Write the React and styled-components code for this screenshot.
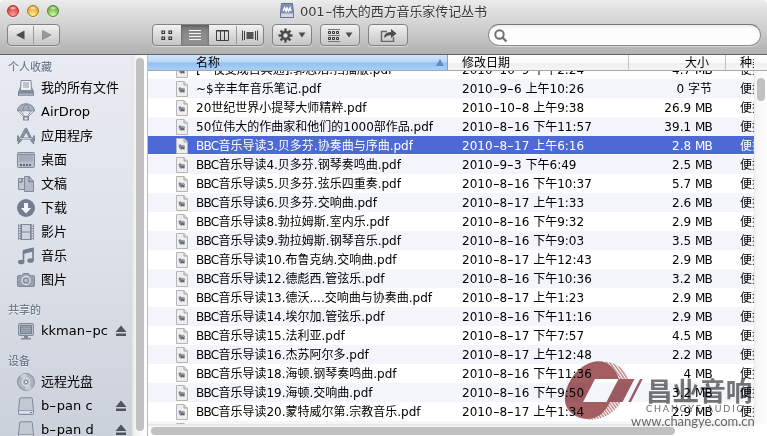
import React from "react";
import styled, { createGlobalStyle, css } from "styled-components";

const Global = createGlobalStyle`
  * { box-sizing: border-box; }
  body { margin: 0; background: #fff; overflow: hidden; }
`;

const Window = styled.div`
  position: relative;
  width: 767px;
  height: 436px;
  display: flex;
  flex-direction: column;
  overflow: hidden;
  font-family: "DejaVu Sans", "Noto Sans CJK SC", sans-serif;
  font-size: 12px;
  color: #000;
  svg { display: block; flex: none; }
`;

/* ---- title and toolbar ---- */
const Chrome = styled.header`
  height: 55px;
  flex: none;
  background: linear-gradient(#ececec, #e2e2e2 8px, #cdcdcd 30px, #b1b1b1);
  border-bottom: 1px solid #626262;
  border-radius: 4px 4px 0 0;
`;
const TitleBar = styled.div`
  height: 24px;
  display: flex;
  align-items: flex-start;
`;
const Lights = styled.div`
  display: flex;
  gap: 8px;
  padding: 5px 0 0 7px;
  width: 280px;
`;
const Light = styled.i`
  width: 12px;
  height: 12px;
  border-radius: 50%;
  border: 1px solid ${(p) => p.$edge};
  background: radial-gradient(ellipse 4px 2px at 5px 2px, #fffc, #fff0), radial-gradient(circle at 50% 90%, ${(p) => p.$glow}, ${(p) => p.$tone} 75%);
  box-shadow: 0 1px 0 #fff8;
`;
const TitleText = styled.div`
  display: flex;
  gap: 6px;
  padding-top: 3px;
  font-size: 13px;
  line-height: 17px;
  letter-spacing: -0.1px;
  color: #383838;
  white-space: nowrap;
  text-shadow: 0 1px 0 #fff8;
`;
const Tools = styled.div`
  display: flex;
  padding-left: 7px;
`;
const Group = styled.div`
  display: flex;
  width: ${(p) => p.$w}px;
  height: 22px;
  margin-right: ${(p) => p.$after || 0}px;
  border: 1px solid #828282;
  border-radius: 4px;
  background: linear-gradient(#f2f2f2, #dadada 50%, #c5c5c5);
  box-shadow: 0 1px 0 #ffffff70;
  overflow: hidden;
`;
const Segment = styled.div`
  flex: ${(p) => (p.$w ? `0 0 ${p.$w}px` : "1")};
  display: flex;
  align-items: center;
  justify-content: center;
  gap: 5px;
  ${(p) => p.$divided && css`
    border-left: 1px solid;
    border-image: linear-gradient(#0000 2px, #999 2px, #999 18px, #0000 18px) 1;
  `}
  ${(p) => p.$on && css`
    background: linear-gradient(#747474, #8a8a8a 40%, #929292);
    box-shadow: inset 0 1px 3px #555;
  `}
`;
const Search = styled.div`
  width: 273px;
  height: 22px;
  padding: 4px 0 0 5px;
  border: 1px solid #8d8d8d;
  border-top-color: #777;
  border-radius: 11px;
  background: linear-gradient(#ededed, #fcfcfc 4px, #fff);
  box-shadow: 0 1px 0 #fff7;
`;

/* ---- body ---- */
const Body = styled.div`
  display: flex;
  flex: 1;
  min-height: 0;
`;
const Sidebar = styled.aside`
  width: 132px;
  background: linear-gradient(#e8ebf1, #dee2ea 45%, #cbd1db);
  overflow: hidden;
`;
const Heading = styled.h2`
  margin: 0;
  padding: ${(p) => p.$top}px 0 0 8px;
  height: ${(p) => p.$h}px;
  font-size: 11px;
  line-height: 14px;
  font-weight: 500;
  color: #707d90;
  text-shadow: 0 1px 0 #fff9;
`;
const Place = styled.div`
  display: flex;
  align-items: center;
  height: 24px;
  padding-left: 17px;
  font-size: 13px;
  white-space: nowrap;
`;
const PlaceIcon = styled.span`
  width: 24px;
`;
const PlaceName = styled.span`
  width: 74px;
  line-height: 22px;
`;
const SideTrack = styled.div`
  width: 16px;
  padding: 3px 4px 0;
  background: linear-gradient(90deg, #dedede, #f0f0f0 2px, #fdfdfd 12px);
  border-right: 1px solid #bcbcbc;
`;
const Thumb = styled.div`
  width: ${(p) => p.$w}px;
  height: ${(p) => p.$h}px;
  border-radius: 4px;
  background: #c1c1c1;
`;
const Files = styled.main`
  flex: 1;
  min-width: 0;
  display: flex;
  flex-direction: column;
`;
const HeadRow = styled.div`
  display: flex;
  height: 16px;
  line-height: 17px;
  flex: none;
  border-bottom: 1px solid #a8a8a8;
  background: linear-gradient(#fff, #f9f9f9 50%, #eee 51%, #f5f5f5);
`;
const HeadCell = styled.div`
  width: ${(p) => p.$w}px;
  display: flex;
  justify-content: ${(p) => (p.$right ? "flex-end" : "space-between")};
  align-items: flex-start;
  padding: 0 ${(p) => p.$pr || 0}px 0 ${(p) => p.$pl || 0}px;
  border-right: ${(p) => (p.$last ? "0" : "1px solid #c4c4c4")};
  white-space: nowrap;
  overflow: hidden;
  svg { margin-top: 4px; }
  ${(p) => p.$sorted && css`
    background: linear-gradient(#d3e6fb, #b8d6f7 48%, #93c0f1 52%, #a9d0f7);
    border-right-color: #7ba0d6;
  `}
`;
const ListArea = styled.div`
  display: flex;
  height: 353px;
  flex: none;
`;
const Rows = styled.div`
  width: 606px;
  overflow: hidden;
  padding-top: 8px;
`;
const Row = styled.div`
  display: flex;
  align-items: center;
  height: 19px;
  line-height: 19px;
  padding: 2px 0 0 28px;
  white-space: nowrap;
  background: ${(p) => (p.$tint ? "#f3f5fa" : "#fff")};
  svg { margin-top: -1px; }
  &:first-child { margin-top: -19px; }
  ${(p) => p.$picked && css`
    background: linear-gradient(#4d69d6 18px, #fff 18px);
    color: #fff;
  `}
`;
const NameCell = styled.div` width: 274px; padding-left: 8px; flex: none; `;
const DateCell = styled.div` width: 154px; flex: none; `;
const SizeCell = styled.div` width: 96px; text-align: right; flex: none; `;
const KindCell = styled.div` padding-left: 28px; flex: none; `;
const ListTrack = styled.div`
  width: 13px;
  padding: 7px 0 0 3px;
  background: linear-gradient(90deg, #e8e8e8, #f6f6f6 2px, #fdfdfd);
`;
const BottomTrack = styled.div`
  flex: 1;
  width: 606px;
  padding: 3px 0 0 3px;
  background: linear-gradient(#dedede, #f5f5f5 2px, #fff 10px);
`;
const Dash = styled.span`
  display: inline-block;
  width: 0.58em;
  text-align: center;
  transform: scaleX(1.55);
`;
const Caps = styled.span` letter-spacing: -0.75px; `;

/* ---- watermark over the list ---- */
const Mark = styled.div`
  position: absolute;
  left: 560px;
  top: 356px;
  width: 194px;
  height: 80px;
  overflow: hidden;
  mix-blend-mode: multiply;
`;
const MarkLine = styled.div`
  position: absolute;
  left: ${(p) => p.$x}px;
  top: ${(p) => p.$y}px;
  white-space: nowrap;
  color: ${(p) => p.$tone || "#6c6c6c"};
  font-family: ${(p) => p.$font}, "Noto Sans CJK SC", sans-serif;
  font-size: ${(p) => p.$size}px;
  line-height: ${(p) => p.$size}px;
  font-weight: ${(p) => p.$weight || 400};
  letter-spacing: ${(p) => p.$gap || 0}px;
`;

const spaced = (text) =>
  text.split(/(-|BBC|MB)/).map((t, i) =>
    t === "-" ? <Dash key={i}>-</Dash> : t === "BBC" || t === "MB" ? <Caps key={i}>{t}</Caps> : t
  );

const G = "#7f899b";
const L = "#e3e7ee";
const Svg = ({ w = 18, h = 18, vb, children }) => (
  <svg width={w} height={h} viewBox={vb || `0 0 ${w} ${h}`} fill="none">{children}</svg>
);

const icons = {
  all: <Svg><path d="M4 1.500h10l.5 10h-11z" fill="#edf0f4" stroke={G} /><path d="M6 4h6M6 6h6M6 8h6" stroke="#8e97a7" /><path d="M3 8l-2 5v4h16v-4l-2-5v4H3z" fill={G} /><path d="M2 14.500h14v2H2z" fill="#a9b1bd" /></Svg>,
  airdrop: <Svg><path d="M.5 8C.5 3.500 4.500.8 9 .8S17.500 3.500 17.500 8q-1.500-1-3 0-1.500-1-3 0-2.500-1.300-5 0-1.500-1-3 0-1.500-1-3 0z" fill="#a6aebb" stroke={G} /><path d="M1 8l6 6M4 8l4 6M17 8l-6 6M14 8l-4 6M6 8Q6 3 9 1q3 2 3 7" stroke={G} strokeWidth=".8" /><path d="M6 13h6v4.500H6z" fill={G} /><path d="M7.500 14.500h3v2h-3z" fill={L} /></Svg>,
  apps: <Svg><path d="M1 17l1-4 5.500-10.500 1.500-1 1 2L4 14zM17 17l-2-1.500L7.500 2l2-1 6 12z" fill="#8b94a4" stroke={G} /><path d="M0 8.500h2v2h14v-2h2v6h-2v-2H2v2H0z" fill={G} /><path d="M3 11.500h12" stroke="#c4cad3" /></Svg>,
  desktop: <Svg><rect x=".5" y="1.500" width="17" height="15" rx="1" fill="#b9c0cb" stroke={G} /><path d="M2 3.500h14v7H2z" fill="#a4acb9" /><path d="M1 3.500h16" stroke="#8790a1" /><path d="M3 14h12" stroke="#5f6a7e" strokeWidth="2" strokeDasharray="2 1" /></Svg>,
  docs: <Svg><path d="M1.500 3.500v11h8v-8l-3-3z" fill="#c2c8d2" stroke={G} /><path d="M7.500 1.500v15h9v-10l-4-5z" fill="#b3bac6" stroke={G} /><path d="M12 1.500v5h5M5 4v3H2" stroke={G} strokeWidth="1.500" /></Svg>,
  down: <Svg><circle cx="9" cy="9" r="9" fill="#737d91" /><path d="M7 4h4v5h3.200L9 14.500 3.800 9H7z" fill="#f4f6f9" /></Svg>,
  movie: <Svg><path d="M1 1h16v16H1z" fill={G} /><path d="M5 2h8v6.500H5zM5 9.500h8V16H5z" fill="#ced3dc" /><path d="M2.500 1v16M15.500 1v16" stroke={L} strokeWidth="1.500" strokeDasharray="1.500 1" /></Svg>,
  music: <Svg><path d="M6.500 15V4l9.500-2.500v12" stroke="#737d91" strokeWidth="1.600" /><path d="M6 3l10.500-2.500v4L6 7z" fill="#737d91" /><ellipse cx="4.200" cy="15" rx="3.200" ry="2.300" fill="#737d91" /><ellipse cx="13.500" cy="13.500" rx="3.200" ry="2.300" fill="#737d91" /></Svg>,
  photo: <Svg><path d="M1.500 4.500h3l2-2h5l2 2h3q1 0 1 1v9q0 1-1 1h-15q-1 0-1-1v-9q0-1 1-1z" fill="#98a1b0" stroke={G} /><circle cx="9" cy="9.500" r="4" fill="#8690a1" stroke="#dfe3ea" strokeWidth="1.300" /><circle cx="9" cy="9.500" r="1.700" fill="#bac1cc" /></Svg>,
  pc: <Svg><rect x="1.500" y="1.500" width="15" height="12" rx="1.500" fill="#bcc2cd" stroke={G} /><path d="M3.500 3.500h11v8h-11z" fill="#a0a9b7" stroke="#717c90" /><path d="M4 5.500h10M4 7.500h10M4 9.500h10" stroke="#8791a2" /><path d="M7 14h4v2h3v1.500H4V16h3z" fill={G} /></Svg>,
  disc: <Svg><circle cx="9" cy="9" r="8.400" fill="#aeb5c1" stroke={G} /><path d="M9 9L3 3Q6 0 10 1zM9 9l6 6q-3 3-7 2z" fill="#c7ccd5" /><circle cx="9" cy="9" r="4" fill="#b6bdc8" stroke="#dfe3e9" /><circle cx="9" cy="9" r="1.700" fill="#edf0f4" stroke={G} /></Svg>,
  drive: <Svg><path d="M3.500.8h11q.7 0 .8.800l1.200 12v3q0 .900-1 .900h-13q-1 0-1-.900v-3L2.700 1.600q.1-.8.800-.8z" fill="#c3c9d3" stroke={G} /><path d="M2 13.500h14v3H2z" fill="#dadfe5" /><path d="M2 13.500h14" stroke="#959daf" /><path d="M13 15.500h2" stroke="#667187" /></Svg>,
};
const Eject = () => <Svg w={12} h={12}><path d="M6 .500L11.500 7H.5zM1 8.500h10V11H1z" fill="#50555d" /></Svg>;
const PdfIcon = () => (
  <Svg w={12} h={16}>
    <path d="M.5.500h7.500L11.500 4v11.500H.5z" fill="#eee" stroke="#b5b5b5" />
    <path d="M8 .500V4h3.500" fill="#dcdcdc" stroke="#a4a4a4" />
    <path d="M2.500 7l2-1 1 2 1.500-1.200L9 8v2.500L8 12l-1.500-1-1.500 1L3 10z" fill="#8b8e96" />
    <path d="M3 7h2.500v2H3z" fill="#6b86bf" /><path d="M5 10h3" stroke="#444" /><path d="M7 8l2 2" stroke="#bda58d" />
  </Svg>
);
const Down = () => <Svg w={8} h={6}><path d="M.500.500h7L4 5.500z" fill="#4d4d4d" /></Svg>;
const Gear = () => (
  <Svg w={15} h={15}>
    {[0, 45, 90, 135].map((a) => <path key={a} d="M7.500.500v14" stroke="#4b4b4b" strokeWidth="2.400" transform={`rotate(${a} 7.500 7.500)`} />)}
    <circle cx="7.500" cy="7.500" r="4.700" fill="#4b4b4b" /><circle cx="7.500" cy="7.500" r="2.200" fill="#dedede" />
  </Svg>
);

const places = [
  ["all", "我的所有文件"], ["airdrop", "AirDrop"], ["apps", "应用程序"], ["desktop", "桌面"], ["docs", "文稿"],
  ["down", "下载"], ["movie", "影片"], ["music", "音乐"], ["photo", "图片"],
];
const devices = [["disc", "远程光盘"], ["drive", "b-pan c", true], ["drive", "b-pan d", true]];
const files = [
  ["[一夜变成古典通].郭志浩.扫描版.pdf", "2010-10-9 下午2:24", "4.7 MB"],
  ["~$辛丰年音乐笔记.pdf", "2010-9-6 上午10:26", "0 字节"],
  ["20世纪世界小提琴大师精粹.pdf", "2010-10-8 上午9:38", "26.9 MB"],
  ["50位伟大的作曲家和他们的1000部作品.pdf", "2010-8-16 下午11:57", "39.1 MB"],
  ["BBC音乐导读3.贝多芬.协奏曲与序曲.pdf", "2010-8-17 上午6:16", "2.8 MB"],
  ["BBC音乐导读4.贝多芬.钢琴奏鸣曲.pdf", "2010-9-3 下午6:49", "2.5 MB"],
  ["BBC音乐导读5.贝多芬.弦乐四重奏.pdf", "2010-8-16 下午10:37", "5.7 MB"],
  ["BBC音乐导读6.贝多芬.交响曲.pdf", "2010-8-17 上午1:33", "2.6 MB"],
  ["BBC音乐导读8.勃拉姆斯.室内乐.pdf", "2010-8-16 下午9:32", "2.9 MB"],
  ["BBC音乐导读9.勃拉姆斯.钢琴音乐.pdf", "2010-8-16 下午9:03", "3.5 MB"],
  ["BBC音乐导读10.布鲁克纳.交响曲.pdf", "2010-8-17 上午12:43", "2.9 MB"],
  ["BBC音乐导读12.德彪西.管弦乐.pdf", "2010-8-16 下午10:36", "3.2 MB"],
  ["BBC音乐导读13.德沃....交响曲与协奏曲.pdf", "2010-8-17 上午1:23", "2.9 MB"],
  ["BBC音乐导读14.埃尔加.管弦乐.pdf", "2010-8-16 下午11:16", "2.9 MB"],
  ["BBC音乐导读15.法利亚.pdf", "2010-8-17 下午7:57", "4.5 MB"],
  ["BBC音乐导读16.杰苏阿尔多.pdf", "2010-8-17 上午12:48", "2.2 MB"],
  ["BBC音乐导读18.海顿.钢琴奏鸣曲.pdf", "2010-8-16 下午11:36", "4 MB"],
  ["BBC音乐导读19.海顿.交响曲.pdf", "2010-8-16 下午9:50", "3.2 MB"],
  ["BBC音乐导读20.蒙特威尔第.宗教音乐.pdf", "2010-8-17 上午1:34", "2.9 MB"],
  ["", "", ""],
];

const PlaceRow = ({ icon, name, eject }) => (
  <Place>
    <PlaceIcon>{icons[icon]}</PlaceIcon>
    <PlaceName>{spaced(name)}</PlaceName>
    {eject && <Eject />}
  </Place>
);

const Watermark = () => (
  <Mark>
    <Svg w={110} h={72}>
      <defs>
        <pattern id="hatch" width="2.600" height="3" patternUnits="userSpaceOnUse" patternTransform="rotate(-35)">
          <path d="M.7 0v3" stroke="#a66164" strokeWidth="1.100" />
        </pattern>
      </defs>
      <path d="M43 5.500C56 6 66 13 68 23H59C57 15 52 9 43 5.500zM27 63.500Q44 59 50 46H61C55 57 42 65 27 63.500z" fill="url(#hatch)" />
      <path d="M38 5.200C49 5 56 13 59 23H35L23 46H50C45 57 37 63 27 63 13 62 4 53 5 41 7 22 22 6 38 5.200z" fill="#a25e61" />
      <path d="M58.500 23H74.500L62.500 46H46.500zM80 23h2.700L71 46h-2.700z" fill="#a25e61" />
    </Svg>
    <MarkLine $x={86} $y={21} $size={26.6} $weight={700} $font={'"Noto Sans CJK SC"'} $tone="#777">昌业音响</MarkLine>
    <MarkLine $x={86} $y={48} $size={9.2} $gap={1.85} $font="Lato">CHANGYE AUDIO</MarkLine>
    <MarkLine $x={71} $y={59} $size={13} $gap={-0.05} $font="Lato">www.changye.com.cn</MarkLine>
  </Mark>
);

export default function App() {
  return (
    <>
      <Global />
      <Window>
        <Chrome>
          <TitleBar>
            <Lights>
              <Light $edge="#9f3836" $tone="#d93e3e" $glow="#ffa09a" />
              <Light $edge="#a27629" $tone="#e5a52f" $glow="#fff192" />
              <Light $edge="#50843c" $tone="#67b149" $glow="#d4ff9d" />
            </Lights>
            <TitleText>
              <Svg w={14} h={15}><path d="M1.500.500h11l1 10v4H.5v-4z" fill="#7892b8" stroke="#64728a" /><path d="M1 10.500h12v3.500H1z" fill="#d5d8dc" /><path d="M3 8l1.500-3L6 8l1-3 1.500 3L10 5l1 3" stroke="#fff" strokeWidth="1.500" /></Svg>
              <span>{spaced("001-伟大的西方音乐家传记丛书")}</span>
            </TitleText>
          </TitleBar>
          <Tools>
            <Group $w={53} $after={92}>
              <Segment><Svg w={9} h={10}><path d="M8.500.500v9L0 5z" fill="#4c4c4c" /></Svg></Segment>
              <Segment $divided><Svg w={9} h={10}><path d="M.500.500v9L9 5z" fill="#999" stroke="#777" strokeWidth=".6" /></Svg></Segment>
            </Group>
            <Group $w={112} $after={8}>
              <Segment $w={28}><Svg w={12} h={11}><path d="M1 1h2.500v2.500H1zM8 1h2.500v2.500H8zM1 7h2.500v2.500H1zM8 7h2.500v2.500H8z" stroke="#333" strokeWidth="1.200" /></Svg></Segment>
              <Segment $w={28} $on><Svg w={12} h={11}><path d="M0 .500h12M0 3.500h12M0 6.500h12M0 9.500h12" stroke="#f2f2f2" /></Svg></Segment>
              <Segment $w={27}><Svg w={14} h={11}><path d="M.500.500h12v10H.5zM4.500 1v9M8.500 1v9M.500 1h12" stroke="#3f3f3f" /></Svg></Segment>
              <Segment $divided><Svg w={16} h={11}><path d="M.500.500v10M2.500 1v9M13.500 1v9M15.500.500v10" stroke="#444" /><path d="M4.500 2h7v7h-7z" fill="#555" /></Svg></Segment>
            </Group>
            <Group $w={40} $after={8}><Segment><Gear /><Down /></Segment></Group>
            <Group $w={40} $after={8}><Segment>
              <Svg w={12} h={13}><path d="M0 .500h12M0 6.500h12M0 12.500h12" stroke="#777" /><path d="M.500 2.500h2v2h-2zM4.500 2.500h2v2h-2zM8.500 2.500h2v2h-2zM.500 8.500h2v2h-2zM4.500 8.500h2v2h-2zM8.500 8.500h2v2h-2z" stroke="#333" /></Svg>
              <Down />
            </Segment></Group>
            <Group $w={40} $after={80}><Segment>
              <Svg w={17} h={13}><path d="M7 2.500H1.500v10h12V8" stroke="#6a6a6a" strokeWidth="1.500" /><path d="M4 9q0-6 7-6V0l5.500 4.500L11 9V6Q7 6 4 9z" fill="#4d4d4d" /></Svg>
            </Segment></Group>
            <Search><Svg w={14} h={14}><circle cx="5.500" cy="5.500" r="4.200" stroke="#707070" strokeWidth="2" /><path d="M8.500 8.500l4 4" stroke="#707070" strokeWidth="2.300" /></Svg></Search>
          </Tools>
        </Chrome>
        <Body>
          <Sidebar>
            <Heading $top={6} $h={21}>个人收藏</Heading>
            {places.map(([icon, name]) => <PlaceRow key={name} icon={icon} name={name} />)}
            <Heading $top={12} $h={27}>共享的</Heading>
            <PlaceRow icon="pc" name="kkman-pc" eject />
            <Heading $top={12} $h={27}>设备</Heading>
            {devices.map(([icon, name, eject]) => <PlaceRow key={name} icon={icon} name={name} eject={eject} />)}
          </Sidebar>
          <SideTrack><Thumb $w={8} $h={373} /></SideTrack>
          <Files>
            <HeadRow>
              <HeadCell $w={300} $pl={48} $pr={3} $sorted>名称<Svg w={8} h={7}><path d="M4 0l4 7H0z" fill="#6488c2" /></Svg></HeadCell>
              <HeadCell $w={181} $pl={14}>修改日期</HeadCell>
              <HeadCell $w={97} $right $pr={16}>大小</HeadCell>
              <HeadCell $w={28} $pl={14} $last>种类</HeadCell>
            </HeadRow>
            <ListArea>
              <Rows>
                {files.map(([name, date, size], i) => (
                  <Row key={i} $tint={i % 2 === 1} $picked={i === 4}>
                    <PdfIcon />
                    <NameCell>{spaced(name)}</NameCell>
                    <DateCell>{spaced(date)}</DateCell>
                    <SizeCell>{spaced(size)}</SizeCell>
                    <KindCell>{name && "便携"}</KindCell>
                  </Row>
                ))}
              </Rows>
              <ListTrack><Thumb $w={8} $h={23} /></ListTrack>
            </ListArea>
            <BottomTrack><Thumb $w={524} $h={8} /></BottomTrack>
          </Files>
        </Body>
        <Watermark />
      </Window>
    </>
  );
}
